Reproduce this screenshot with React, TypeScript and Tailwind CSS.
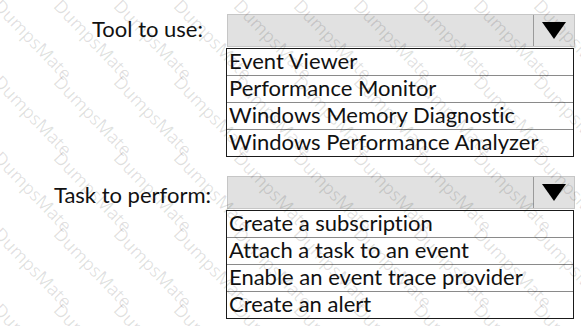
import React from "react";

const font = { fontFamily: "Lato, 'Open Sans', sans-serif" };

function Dropdown({ items }: { items: string[] }) {
  return (
    <div className="flex w-[349px] flex-col">
      <div className="ml-[1px] flex h-[33px] w-[348px] border border-[#c6c6c6] bg-[#e1e1e1]">
        <div className="flex-1" />
        <div className="flex w-[41px] items-center justify-center border-l border-[#9a9a9a]">
          <svg width="24" height="17" viewBox="0 0 24 17">
            <polygon points="0,0 24,0 12,17" fill="#000" />
          </svg>
        </div>
      </div>
      <div className="mt-[1px] flex w-[348px] flex-col border border-[#1a1a1a] bg-white">
        {items.map((t, i) => (
          <div
            key={t}
            className={`flex items-end pb-[3px] pl-[2px] text-[22px] leading-none text-[#111] [font-variant-ligatures:none] ${i > 0 ? "h-[27px] border-t border-[#8a8a8a]" : "h-[26px]"}`}
          >
            {t}
          </div>
        ))}
      </div>
    </div>
  );
}

export default function App() {
  const marks: { x: number; y: number }[] = [];
  for (let r = 0; r < 5; r++) {
    for (let c = 0; c < 11; c++) {
      marks.push({ x: 4 + c * 60, y: -4 + r * 76 });
    }
  }
  return (
    <div className="relative h-[326px] w-[581px] overflow-hidden bg-white" style={font}>
      <div className="flex flex-col pt-[14px]">
        <div className="flex">
          <div className="w-[226px] pr-[23px] text-right text-[22px] leading-[30px] text-[#111] [font-variant-ligatures:none]">Tool to use:</div>
          <Dropdown items={["Event Viewer", "Performance Monitor", "Windows Memory Diagnostic", "Windows Performance Analyzer"]} />
        </div>
        <div className="mt-[19px] flex">
          <div className="w-[226px] pr-[15px] pt-[4px] text-right text-[22px] leading-[30px] text-[#111] [font-variant-ligatures:none]">Task to perform:</div>
          <Dropdown items={["Create a subscription", "Attach a task to an event", "Enable an event trace provider", "Create an alert"]} />
        </div>
      </div>
      <div className="pointer-events-none absolute inset-0">
        {marks.map((m, i) => (
          <span
            key={i}
            className="absolute origin-top-left rotate-[46deg] whitespace-nowrap text-[18px] leading-none text-black/[0.12]"
            style={{ left: m.x, top: m.y, fontFamily: "'Open Sans', sans-serif" }}
          >
            DumpsMate
          </span>
        ))}
      </div>
    </div>
  );
}
